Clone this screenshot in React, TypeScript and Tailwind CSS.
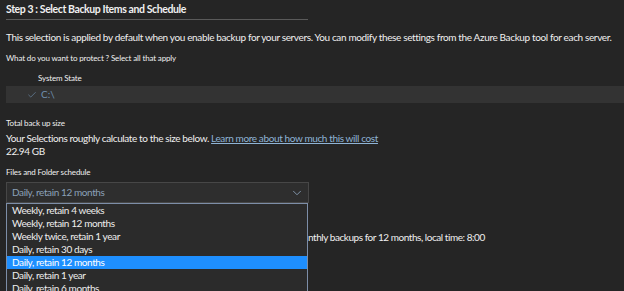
import { Check, ChevronDown } from 'lucide-react';

const font = { fontFamily: "Lato, 'Noto Sans', sans-serif" };

const options = [
  'Weekly, retain 4 weeks',
  'Weekly, retain 12 months',
  'Weekly twice, retain 1 year',
  'Daily, retain 30 days',
  'Daily, retain 12 months',
  'Daily, retain 1 year',
  'Daily, retain 6 months',
];

export default function App() {
  return (
    <div style={font} className="relative h-[291px] w-[624px] overflow-hidden bg-[#252525] pl-[6px] text-[#f0f0f0]">
      <div className="pt-[2px] text-[10.5px] font-bold leading-[15px] tracking-[-0.4px]">Step 3 : Select Backup Items and Schedule</div>
      <div className="mt-[2px] h-px w-[302px] bg-[#5a5a5a]" />
      <p className="mt-[10px] whitespace-nowrap text-[10px] leading-[15px] tracking-[-0.36px]">
        This selection is applied by default when you enable backup for your servers. You can modify these settings from the Azure Backup tool for each server.
      </p>
      <div className="mt-[7px] text-[8px] leading-[12px] tracking-[-0.15px]">What do you want to protect ? Select all that apply</div>
      <div className="mt-[8px] pl-[32px] text-[8px] leading-[12px] tracking-[-0.15px]">System State</div>
      <div className="mt-[2px] flex h-[17px] items-center gap-[4px] bg-[#333333] pl-[21px] text-[10px] text-[#7090b0]">
        <Check className="h-[10px] w-[10px]" strokeWidth={1.5} />
        <span>C:\</span>
      </div>
      <div className="mt-[14px] text-[8px] leading-[12px] tracking-[-0.15px]">Total back up size</div>
      <div className="mt-[3px] whitespace-nowrap text-[10px] leading-[13px] tracking-[-0.38px]">
        Your Selections roughly calculate to the size below.{' '}
        <span className="text-[#8fb4d6] underline">Learn more about how much this will cost</span>
      </div>
      <div className="text-[10px] leading-[13px] tracking-[-0.4px]">22.94 GB</div>
      <div className="mt-[8px] text-[8px] leading-[12px] tracking-[-0.15px]">Files and Folder schedule</div>
      <div className="mt-[4px] flex h-[21px] w-[303px] items-center justify-between border border-[#474747] bg-[#2e2e2e] pl-[5px] pr-[4px] text-[10px] tracking-[-0.4px] text-[#8aa0b8]">
        <span>Daily, retain 12 months</span>
        <ChevronDown className="h-[14px] w-[14px] text-[#8aa0b8]" strokeWidth={1.5} />
      </div>
      <div className="relative">
        <div className="absolute left-[302px] top-[27px] whitespace-nowrap text-[10px] tracking-[-0.45px]">
          nthly backups for 12 months, local time: 8:00
        </div>
        <div className="absolute left-0 top-0 w-[302px] border border-[#7d8ea8] bg-[#2b2b2b] text-[10px] tracking-[-0.4px]">
          {options.map((o, i) => (
            <div
              key={o}
              className={`h-[13px] pl-[5px] leading-[13px] ${i === 4 ? 'bg-[#1e8fff] text-white' : 'text-[#eeeeee]'}`}
            >
              {o}
            </div>
          ))}
        </div>
      </div>
    </div>
  );
}
